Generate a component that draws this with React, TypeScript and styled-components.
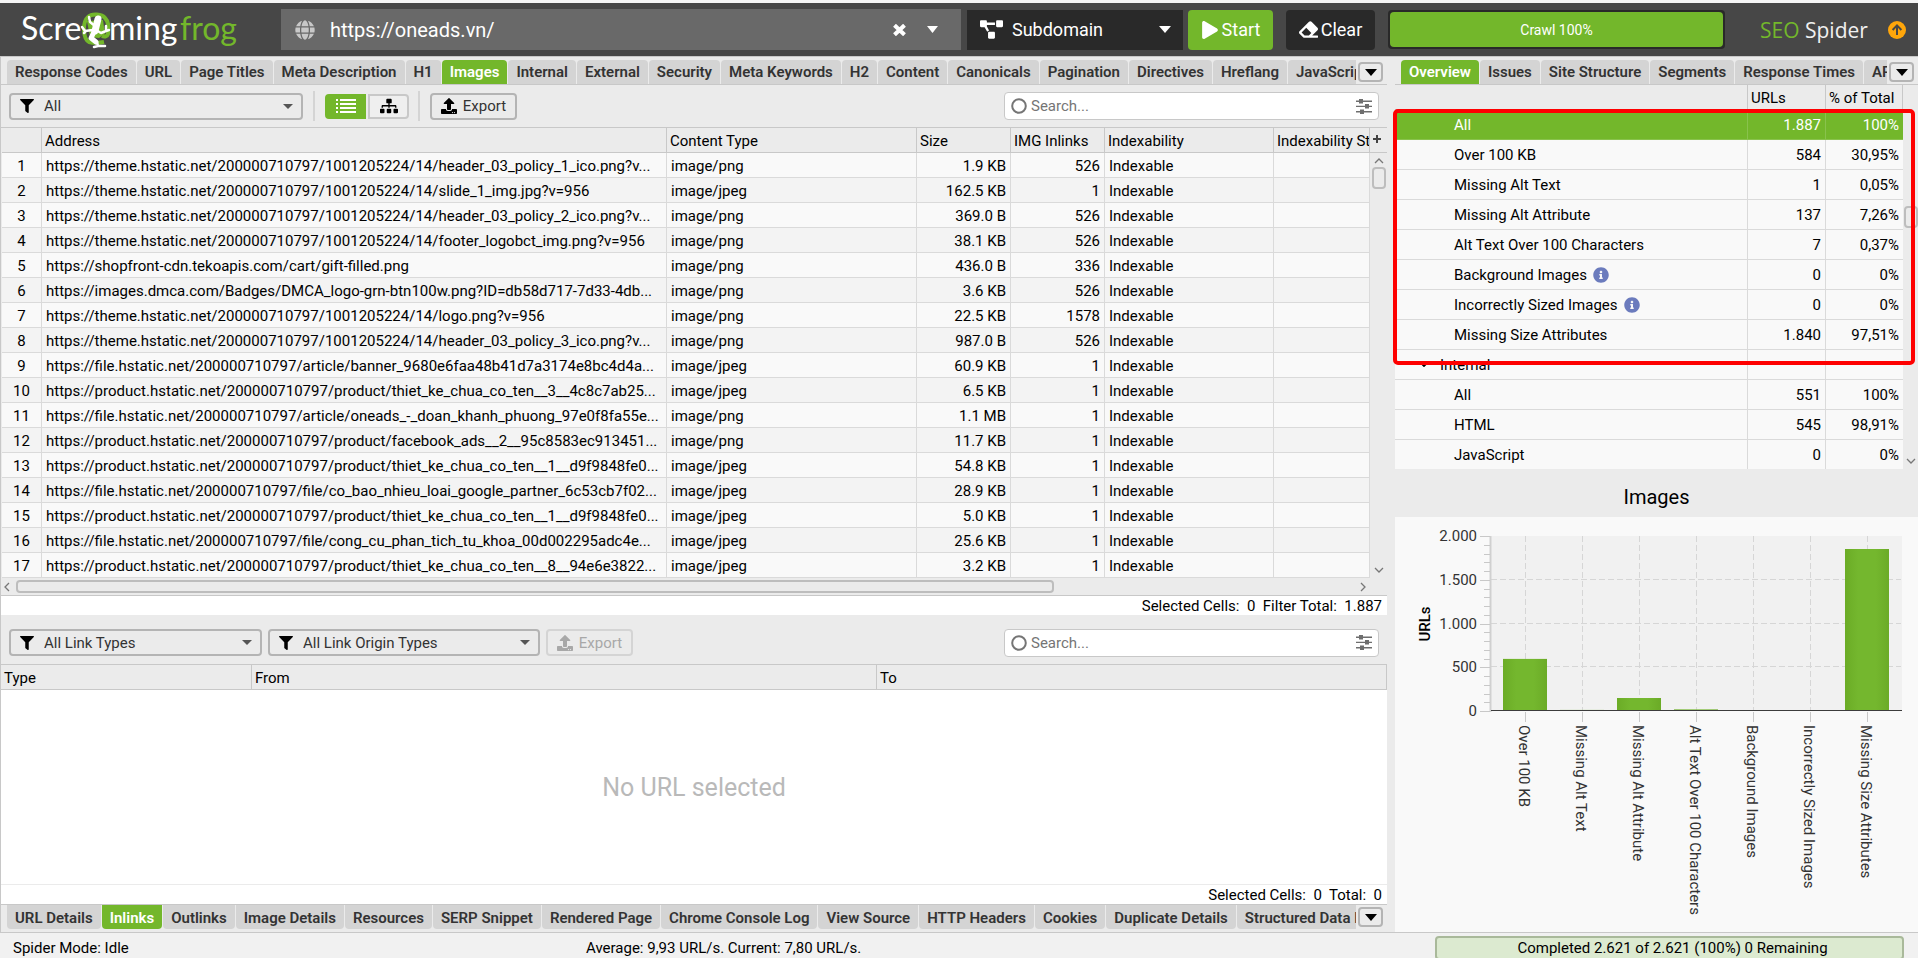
import React from 'react';
import styled, { createGlobalStyle } from 'styled-components';
import {
  FaCaretDown,
  FaEraser,
  FaFilter,
  FaGlobe,
  FaInfoCircle,
  FaPlay,
  FaProjectDiagram,
  FaSitemap,
  FaUpload,
} from 'react-icons/fa';

const c = {
  green: '#73b72b',
  dark: '#474747',
  black: '#292929',
  panel: '#ebebeb',
  tab: '#d4d4d4',
  line: '#c8c8c8',
  cellLine: '#dadada',
  row: '#f9f9f9',
  rowAlt: '#f3f3f3',
  mute: '#757575',
};

const GlobalStyle = createGlobalStyle`
  * { box-sizing: border-box; }
  body {
    margin: 0;
    background: ${c.panel};
    color: #000;
    font-family: Roboto, "Liberation Sans", sans-serif;
    font-size: 15px;
    line-height: 20px;
  }
  button, input, select { font: inherit; color: inherit; margin: 0; }
`;

const Page = styled.div`
  display: flex;
  flex-direction: column;
  height: 100vh;
  overflow: hidden;
`;

/* ---------- top bar ---------- */

const TopBar = styled.header`
  display: flex;
  align-items: center;
  height: 57px;
  flex: none;
  padding: 0 12px 0 20px;
  background: ${c.dark};
  border-top: 3px solid #f5f5f5;
  border-bottom: 1px solid ${c.line};
`;

const LogoSvg = styled.svg`
  flex: none;
  width: 220px;
  height: 52px;
  margin-right: 41px;
  font-family: Lato, sans-serif;
`;

const UrlBox = styled.label`
  display: flex;
  align-items: center;
  flex: 1;
  height: 41px;
  padding: 0 20px 0 14px;
  gap: 15px;
  background: #696969;
  color: #c8c8c8;
`;

const UrlInput = styled.input`
  flex: 1;
  min-width: 0;
  border: 0;
  padding: 0;
  outline: 0;
  background: transparent;
  color: #fff;
  font-size: 20px;
`;

const BareButton = styled.button`
  display: flex;
  align-items: center;
  justify-content: center;
  flex: none;
  width: 18px;
  height: 24px;
  padding: 0;
  border: 0;
  background: transparent;
  color: #fff;
`;

const ScopeBox = styled.div`
  display: flex;
  align-items: center;
  position: relative;
  width: 216px;
  height: 40px;
  margin-left: 6px;
  background: ${c.black};
  color: #fff;
`;

const ScopeSelect = styled.select`
  appearance: none;
  width: 100%;
  height: 40px;
  padding: 0 40px 0 45px;
  border: 0;
  background: transparent;
  font-size: 18px;
`;

const Overlay = styled.span<{ $left?: number; $right?: number }>`
  position: absolute;
  display: flex;
  top: 0;
  bottom: 0;
  align-items: center;
  pointer-events: none;
  ${(p) => (p.$left !== undefined ? `left: ${p.$left}px;` : '')}
  ${(p) => (p.$right !== undefined ? `right: ${p.$right}px;` : '')}
`;

const ActionButton = styled.button<{ $tone: string; $width: number }>`
  display: flex;
  align-items: center;
  justify-content: center;
  gap: 3px;
  width: ${(p) => p.$width}px;
  height: 40px;
  margin-left: ${(p) => (p.$tone === c.green ? 5 : 13)}px;
  padding: 0;
  border: 0;
  border-radius: 4px;
  background: ${(p) => p.$tone};
  color: #fff;
  font-size: 18px;
`;

const CrawlProgress = styled.div`
  width: 337px;
  height: 39px;
  margin-left: 13px;
  padding: 2px;
  border-radius: 4px;
  background: ${c.black};
`;

const CrawlFill = styled.div`
  display: flex;
  align-items: center;
  justify-content: center;
  height: 35px;
  border-radius: 4px;
  background: ${c.green};
  color: #fff;
  font-size: 14px;
`;

const Product = styled.div`
  margin-left: 35px;
  width: 128px;
  font-family: "Open Sans", sans-serif;
  font-size: 21px;
  line-height: 30px;
  color: #f0f0f0;
  white-space: nowrap;
  span { color: ${c.green}; }
`;

/* ---------- shared parts ---------- */

const Workspace = styled.main`
  display: grid;
  grid-template-columns: minmax(0, 1fr) 523px;
  column-gap: 8px;
  flex: 1;
  min-height: 0;
`;

const LeftPane = styled.section`
  display: flex;
  flex-direction: column;
  min-height: 0;
  border-left: 1px solid ${c.line};
`;

const RightPane = styled.section`
  display: flex;
  flex-direction: column;
  min-height: 0;
`;

const TabStrip = styled.div<{ $bottom?: boolean }>`
  display: flex;
  align-items: ${(p) => (p.$bottom ? 'flex-start' : 'flex-end')};
  flex: none;
  height: 28px;
  gap: 2px;
  padding: 0 4px 0 6px;
  border-top: ${(p) => (p.$bottom ? `1px solid ${c.line}` : '0')};
  border-bottom: ${(p) => (p.$bottom ? '0' : `1px solid ${c.line}`)};
`;

const TabList = styled.div`
  display: flex;
  flex: 1;
  min-width: 0;
  gap: 1px;
  overflow: hidden;
`;

const Tab = styled.button<{ $active: boolean; $bottom?: boolean }>`
  flex: none;
  height: 24px;
  padding: ${(p) => (p.$bottom ? '1px' : '0')} 8px 0;
  border: 0;
  border-radius: ${(p) => (p.$bottom ? '0 0 4px 4px' : '4px 4px 0 0')};
  background: ${(p) => (p.$active ? c.green : c.tab)};
  color: ${(p) => (p.$active ? '#fff' : '#333')};
  font-weight: 600;
  white-space: nowrap;
`;

const MoreTabs = styled.button`
  display: flex;
  align-items: center;
  justify-content: center;
  width: 25px;
  height: 20px;
  margin: 2px 0;
  padding: 0;
  border: 2px solid #b4b4b4;
  border-radius: 4px;
  background: ${c.panel};
`;

const Toolbar = styled.div<{ $lower?: boolean }>`
  display: flex;
  align-items: center;
  flex: none;
  height: ${(p) => (p.$lower ? 50 : 43)}px;
  padding: ${(p) => (p.$lower ? 6 : 0)}px 8px 0;
  border-bottom: 1px solid ${c.line};
`;

const SelectBox = styled.div<{ $width: number }>`
  position: relative;
  width: ${(p) => p.$width}px;
  margin-right: 6px;
`;

const Select = styled.select`
  appearance: none;
  display: block;
  width: 100%;
  height: 27px;
  padding: 0 28px 0 33px;
  border: 2px solid #b4b4b4;
  border-radius: 4px;
  background: ${c.panel};
  color: #333;
`;

const Divider = styled.span`
  width: 2px;
  height: 30px;
  margin: 0 10px 0 4px;
  background: #d4d4d4;
`;

const ViewToggle = styled.div`
  display: flex;
  gap: 2px;
  margin-right: 5px;
`;

const ViewButton = styled.button<{ $active?: boolean }>`
  display: flex;
  align-items: center;
  justify-content: center;
  width: 41px;
  height: 25px;
  padding: 0;
  border: 2px solid ${(p) => (p.$active ? c.green : c.line)};
  border-radius: ${(p) => (p.$active ? '4px 0 0 4px' : '0 4px 4px 0')};
  background: ${(p) => (p.$active ? c.green : '#efefef')};
`;

const ExportButton = styled.button`
  display: flex;
  align-items: center;
  justify-content: center;
  gap: 6px;
  width: 87px;
  height: 27px;
  padding: 0;
  border: 2px solid #b4b4b4;
  border-radius: 4px;
  background: ${c.panel};
  color: #333;
  svg { color: #000; }
  &:disabled { border-color: #d4d4d4; color: #a8a8a8; }
  &:disabled svg { color: #a8a8a8; }
`;

const SearchBox = styled.label`
  display: flex;
  align-items: center;
  gap: 4px;
  width: 375px;
  height: 28px;
  margin-left: auto;
  padding: 0 6px;
  border: 1px solid ${c.line};
  border-radius: 4px;
  background: #fff;
`;

const SearchInput = styled.input`
  flex: 1;
  min-width: 0;
  border: 0;
  padding: 0;
  outline: 0;
  background: transparent;
  &::placeholder { color: ${c.mute}; opacity: 1; }
`;

const Totals = styled.div`
  flex: none;
  height: 19px;
  padding-right: 5px;
  background: #fff;
  text-align: right;
  white-space: pre;
`;

/* ---------- tables ---------- */

const TableFrame = styled.div`
  display: grid;
  grid-template-columns: minmax(0, 1fr) 17px;
  flex: none;
  padding-left: 1px;
  border-bottom: 1px solid ${c.line};
`;

const Table = styled.table`
  width: 100%;
  table-layout: fixed;
  border-collapse: separate;
  border-spacing: 0;
`;

const Th = styled.th`
  height: 25px;
  padding: 1px 0 0 3px;
  border-right: 1px solid ${c.line};
  border-bottom: 1px solid ${c.line};
  text-align: left;
  font-weight: 400;
  white-space: nowrap;
  overflow: hidden;
`;

const Row = styled.tr`
  background: ${c.row};
  &:nth-child(even) { background: ${c.rowAlt}; }
`;

const Td = styled.td<{ $align?: 'center' | 'right' }>`
  height: 25px;
  padding: 1px 4px 0;
  border-right: 1px solid ${c.cellLine};
  border-bottom: 1px solid ${c.cellLine};
  text-align: ${(p) => p.$align || 'left'};
  white-space: nowrap;
  overflow: hidden;
`;

const SideColumn = styled.div`
  display: flex;
  flex-direction: column;
`;

const AddColumn = styled.button`
  display: flex;
  align-items: center;
  justify-content: center;
  height: 25px;
  padding: 0 4px 3px 0;
  border: 0;
  border-bottom: 1px solid ${c.line};
  background: ${c.panel};
`;

const VBar = styled.div`
  display: flex;
  flex-direction: column;
  align-items: center;
  flex: 1;
  padding: 3px 0;
  background: ${c.panel};
`;

const HBar = styled.div`
  display: flex;
  align-items: center;
  height: 17px;
  padding: 0 2px 0 0;
`;

const Thumb = styled.span<{ $push: number }>`
  width: 14px;
  height: 22px;
  margin-top: ${(p) => p.$push}px;
  margin-bottom: auto;
  border: 2px solid #bdbdbd;
  border-radius: 4px;
`;

const HThumb = styled.span`
  width: 76%;
  height: 13px;
  margin: 0 auto 0 4px;
  border: 2px solid #bdbdbd;
  border-radius: 4px;
`;

const EmptyBody = styled.div`
  display: flex;
  align-items: center;
  justify-content: center;
  flex: 1;
  min-height: 60px;
  padding-top: 2px;
  background: #fff;
  border-bottom: 1px solid ${c.panel};
  color: #b9b9b9;
  font-size: 25px;
`;

/* ---------- overview ---------- */

const Overview = styled.div`
  position: relative;
  display: grid;
  grid-template-columns: minmax(0, 1fr) 15px;
  flex: none;
  height: 384px;
`;

const OverviewClip = styled.div`
  overflow: hidden;
`;

const OverviewRow = styled.tr<{ $active?: boolean }>`
  background: ${(p) => (p.$active ? c.green : c.row)};
  color: ${(p) => (p.$active ? '#fff' : '#000')};
  td { height: 30px; }
  td:first-child { padding-left: 59px; }
  td:last-child { border-right: 0; }
  ${(p) => (p.$active ? 'td { border-color: #89c24d; }' : '')}
`;

const OverviewGroup = styled(OverviewRow)`
  td:first-child { padding-left: 24px; }
`;

const Label = styled.span`
  display: inline-flex;
  align-items: center;
  gap: 6px;
  svg { color: #6b7bbd; }
`;

const GroupLabel = styled(Label)`
  gap: 11px;
  svg { color: #000; }
`;

const Highlight = styled.div`
  position: absolute;
  top: 24px;
  left: -2px;
  right: 3px;
  height: 256px;
  border: 4px solid #fe0000;
  border-radius: 5px;
  pointer-events: none;
`;

const ChartTitle = styled.h2`
  flex: none;
  margin: 0;
  height: 48px;
  padding-top: 16px;
  text-align: center;
  font-size: 20px;
  line-height: 24px;
  font-weight: 400;
`;

const ChartPane = styled.div`
  flex: 1;
  min-height: 0;
  background: ${c.row};
`;

const ChartSvg = styled.svg`
  display: block;
  width: 100%;
  font-size: 15px;
`;

/* ---------- status bar ---------- */

const StatusBar = styled.footer`
  display: grid;
  grid-template-columns: 573px minmax(0, 1fr) 469px;
  align-items: start;
  flex: none;
  height: 26px;
  padding: 3px 14px 0 13px;
  border-top: 1px solid ${c.line};
  background: #f1f1f1;
`;

const StatusText = styled.span`
  padding-top: 2px;
`;

const Completed = styled.div`
  height: 24px;
  padding-left: 6px;
  border: 2px solid #a9b99a;
  border-radius: 4px;
  background: #dcead0;
  text-align: center;
`;

/* ---------- icons ---------- */

const ChevronIcon = ({ d }: { d: string }) => (
  <svg width="10" height="10" viewBox="0 0 10 10" fill="none" stroke="#777" strokeWidth="1.3">
    <path d={d} />
  </svg>
);

const Triangle = ({ w, h, fill }: { w: number; h: number; fill: string }) => (
  <svg width={w} height={h} viewBox="0 0 12 8" preserveAspectRatio="none">
    <path d="M0 0h12L6 8z" fill={fill} />
  </svg>
);

const PlusIcon = () => (
  <svg width="8" height="8" viewBox="0 0 8 8" fill="#444">
    <path d="M3 0h2v3h3v2H5v3H3V5H0V3h3z" />
  </svg>
);

const ListIcon = () => (
  <svg width="20" height="14" viewBox="0 0 20 14" fill="#fff">
    {[0, 4, 8, 12].map((y) => (
      <path key={y} d={`M0 ${y}h2v2h-2zM4 ${y}h16v2h-16z`} />
    ))}
  </svg>
);

const SlidersIcon = () => (
  <svg width="16" height="15" viewBox="0 0 16 15" fill="#6e6e6e">
    <path d="M0 1.5h16v1.6H0zM0 6.8h16v1.2H0zM0 12h16v1.4H0z" />
    <path d="M3 0h4v4.4H3zM9 5h4v4.6H9zM4 10.4h4V15H4z" />
  </svg>
);

const RingIcon = () => (
  <svg width="16" height="16" viewBox="0 0 16 16" fill="none" stroke="#757575" strokeWidth="2">
    <circle cx="8" cy="8" r="6.8" />
  </svg>
);

const CrossIcon = () => (
  <svg width="13" height="12" viewBox="0 0 13 12" stroke="#fff" strokeWidth="4">
    <path d="M1.5 1.2l10 9.6M11.5 1.2l-10 9.6" />
  </svg>
);

const UpgradeIcon = () => (
  <svg width="18" height="18" viewBox="0 0 18 18">
    <circle cx="9" cy="9" r="9" fill="#ffa60a" />
    <path d="M9 14V4.5M4.6 9L9 4.4 13.4 9" fill="none" stroke="#474747" strokeWidth="2" />
  </svg>
);

const Logo = () => (
  <LogoSvg viewBox="0 0 220 52" role="img" aria-label="Screamingfrog">
    <g fontSize="32">
      <text x="1" y="36" fill="#fff">Scre</text>
      <text x="89" y="36" fill="#fff">ming</text>
      <text x="160" y="36" fill={c.green}>frog</text>
    </g>
    <path
      d="M84 38c-5 1-11 1-15 0-6-3-7-20-1-25 4-4 14-3 17 1 3 3 4 9 3 16-1 3-4 3-6 2"
      fill="none"
      stroke={c.green}
      strokeWidth="4"
    />
    <path d="M67 17l16-1 2 14-6 4-9-1z" fill={c.green} />
    <g fill="none" stroke="#fff" strokeLinecap="round" strokeLinejoin="round">
      <path d="M78 15l-3 12" strokeWidth="7" />
      <path d="M69 13l1 5 5 4" strokeWidth="2.5" />
      <path d="M62 23l3 4 8-1M64 29l2-2" strokeWidth="2.5" />
      <path d="M76 26l5 3 5-2M86 22v5l3-1" strokeWidth="2.5" />
      <path d="M74 28l-3 6 5 4" strokeWidth="5" />
      <path d="M77 38l1 4M74 43l4-1 7 0" strokeWidth="2.5" />
    </g>
  </LogoSvg>
);

/* ---------- data ---------- */

const topTabs = [
  'Response Codes', 'URL', 'Page Titles', 'Meta Description', 'H1', 'Images', 'Internal', 'External',
  'Security', 'Meta Keywords', 'H2', 'Content', 'Canonicals', 'Pagination', 'Directives', 'Hreflang', 'JavaScript',
];

const bottomTabs = [
  'URL Details', 'Inlinks', 'Outlinks', 'Image Details', 'Resources', 'SERP Snippet', 'Rendered Page',
  'Chrome Console Log', 'View Source', 'HTTP Headers', 'Cookies', 'Duplicate Details', 'Structured Data Details',
];

const sideTabs = ['Overview', 'Issues', 'Site Structure', 'Segments', 'Response Times', 'API'];

const rows: [string, string, string, string][] = [
  ['https://theme.hstatic.net/200000710797/1001205224/14/header_03_policy_1_ico.png?v...', 'image/png', '1.9 KB', '526'],
  ['https://theme.hstatic.net/200000710797/1001205224/14/slide_1_img.jpg?v=956', 'image/jpeg', '162.5 KB', '1'],
  ['https://theme.hstatic.net/200000710797/1001205224/14/header_03_policy_2_ico.png?v...', 'image/png', '369.0 B', '526'],
  ['https://theme.hstatic.net/200000710797/1001205224/14/footer_logobct_img.png?v=956', 'image/png', '38.1 KB', '526'],
  ['https://shopfront-cdn.tekoapis.com/cart/gift-filled.png', 'image/png', '436.0 B', '336'],
  ['https://images.dmca.com/Badges/DMCA_logo-grn-btn100w.png?ID=db58d717-7d33-4db...', 'image/png', '3.6 KB', '526'],
  ['https://theme.hstatic.net/200000710797/1001205224/14/logo.png?v=956', 'image/png', '22.5 KB', '1578'],
  ['https://theme.hstatic.net/200000710797/1001205224/14/header_03_policy_3_ico.png?v...', 'image/png', '987.0 B', '526'],
  ['https://file.hstatic.net/200000710797/article/banner_9680e6faa48b41d7a3174e8bc4d4a...', 'image/jpeg', '60.9 KB', '1'],
  ['https://product.hstatic.net/200000710797/product/thiet_ke_chua_co_ten__3__4c8c7ab25...', 'image/jpeg', '6.5 KB', '1'],
  ['https://file.hstatic.net/200000710797/article/oneads_-_doan_khanh_phuong_97e0f8fa55e...', 'image/png', '1.1 MB', '1'],
  ['https://product.hstatic.net/200000710797/product/facebook_ads__2__95c8583ec913451...', 'image/png', '11.7 KB', '1'],
  ['https://product.hstatic.net/200000710797/product/thiet_ke_chua_co_ten__1__d9f9848fe0...', 'image/jpeg', '54.8 KB', '1'],
  ['https://file.hstatic.net/200000710797/file/co_bao_nhieu_loai_google_partner_6c53cb7f02...', 'image/jpeg', '28.9 KB', '1'],
  ['https://product.hstatic.net/200000710797/product/thiet_ke_chua_co_ten__1__d9f9848fe0...', 'image/jpeg', '5.0 KB', '1'],
  ['https://file.hstatic.net/200000710797/file/cong_cu_phan_tich_tu_khoa_00d002295adc4e...', 'image/jpeg', '25.6 KB', '1'],
  ['https://product.hstatic.net/200000710797/product/thiet_ke_chua_co_ten__8__94e6e3822...', 'image/jpeg', '3.2 KB', '1'],
];

type Stat = { label: string; urls: string; pct: string; info?: boolean };

const imageStats: Stat[] = [
  { label: 'All', urls: '1.887', pct: '100%' },
  { label: 'Over 100 KB', urls: '584', pct: '30,95%' },
  { label: 'Missing Alt Text', urls: '1', pct: '0,05%' },
  { label: 'Missing Alt Attribute', urls: '137', pct: '7,26%' },
  { label: 'Alt Text Over 100 Characters', urls: '7', pct: '0,37%' },
  { label: 'Background Images', urls: '0', pct: '0%', info: true },
  { label: 'Incorrectly Sized Images', urls: '0', pct: '0%', info: true },
  { label: 'Missing Size Attributes', urls: '1.840', pct: '97,51%' },
];

const internalStats: Stat[] = [
  { label: 'All', urls: '551', pct: '100%' },
  { label: 'HTML', urls: '545', pct: '98,91%' },
  { label: 'JavaScript', urls: '0', pct: '0%' },
];

const chartData: [string, number][] = [
  ['Over 100 KB', 584],
  ['Missing Alt Text', 1],
  ['Missing Alt Attribute', 137],
  ['Alt Text Over 100 Characters', 7],
  ['Background Images', 0],
  ['Incorrectly Sized Images', 0],
  ['Missing Size Attributes', 1840],
];

/* ---------- composed pieces ---------- */

const Tabs = ({ items, active, bottom }: { items: string[]; active: string; bottom?: boolean }) => (
  <TabStrip $bottom={bottom}>
    <TabList role="tablist">
      {items.map((t) => (
        <Tab key={t} role="tab" aria-selected={t === active} $active={t === active} $bottom={bottom}>
          {t}
        </Tab>
      ))}
    </TabList>
    <MoreTabs aria-label="More tabs">
      <Triangle w={12} h={7} fill="#000" />
    </MoreTabs>
  </TabStrip>
);

const FilterSelect = ({ width, value, label }: { width: number; value: string; label: string }) => (
  <SelectBox $width={width}>
    <Select aria-label={label} defaultValue={value}>
      <option>{value}</option>
    </Select>
    <Overlay $left={11}>
      <FaFilter size={14} color="#000" />
    </Overlay>
    <Overlay $right={10}>
      <Triangle w={10} h={5} fill="#555" />
    </Overlay>
  </SelectBox>
);

const Search = () => (
  <SearchBox>
    <RingIcon />
    <SearchInput placeholder="Search..." aria-label="Search" />
    <SlidersIcon />
  </SearchBox>
);

const BarChart = () => {
  const base = 194;
  const scale = 175 / 2000;
  const x = (i: number) => 130 + i * 57;
  return (
    <ChartSvg viewBox="0 0 523 415" role="img" aria-label="Images by URL count">
      <defs>
        <linearGradient id="bar">
          <stop offset="0" stopColor="#6bac26" />
          <stop offset="0.3" stopColor="#74b72e" />
          <stop offset="0.7" stopColor="#74b72e" />
          <stop offset="1" stopColor="#6bab27" />
        </linearGradient>
      </defs>
      <rect x="96" y="19" width="411" height="175" fill="#f1f1f1" />
      <g stroke="#d6d6d6" strokeDasharray="6 3">
        {[500, 1000, 1500].map((v) => (
          <path key={v} d={`M96 ${Math.round(base - v * scale) - 0.5}H506`} />
        ))}
        {chartData.map((d, i) => (
          <path key={d[0]} d={`M${x(i) + 0.5} 19V194`} />
        ))}
      </g>
      {chartData.map(([name, v], i) => (
        <rect key={name} x={x(i) - 22} y={base - v * scale - (v ? 1 : 0)} width="44" height={v * scale + (v ? 1 : 0)} fill="url(#bar)" />
      ))}
      <path d="M95.5 19V195" stroke="#d0d0d0" strokeWidth="2" />
      <g stroke="#c8c8c8">
        {Array.from({ length: 21 }, (_, i) => (
          <path key={i} d={`M${i % 5 ? 89 : 85} ${Math.round(base - i * 100 * scale) + 0.5}H95`} />
        ))}
        {chartData.map((d, i) => (
          <path key={d[0]} d={`M${x(i) + 0.5} 195V205`} />
        ))}
      </g>
      <path d="M96 193.5H507" stroke="#3c3c3c" />
      <g fill="#333" textAnchor="end">
        {['0', '500', '1.000', '1.500', '2.000'].map((t, i) => (
          <text key={t} x="82" y={Math.round(base - i * 500 * scale) + 5}>{t}</text>
        ))}
      </g>
      <g fill="#333">
        {chartData.map(([name], i) => (
          <text key={name} transform={`translate(${x(i) - 6} 208) rotate(90)`}>{name}</text>
        ))}
      </g>
      <text transform="translate(35 107) rotate(-90)" textAnchor="middle" fontWeight="500">URLs</text>
    </ChartSvg>
  );
};

const StatRow = ({ s, active }: { s: Stat; active?: boolean }) => (
  <OverviewRow $active={active}>
    <Td>
      <Label>
        {s.label}
        {s.info && <FaInfoCircle size={16} />}
      </Label>
    </Td>
    <Td $align="right">{s.urls}</Td>
    <Td $align="right">{s.pct}</Td>
  </OverviewRow>
);

export default function App() {
  return (
    <Page>
      <GlobalStyle />
      <TopBar>
        <Logo />
        <UrlBox>
          <FaGlobe size={20} />
          <UrlInput aria-label="URL to spider" defaultValue="https://oneads.vn/" />
          <BareButton aria-label="Clear URL">
            <CrossIcon />
          </BareButton>
          <BareButton aria-label="Recent URLs">
            <Triangle w={11} h={7} fill="#fff" />
          </BareButton>
        </UrlBox>
        <ScopeBox>
          <ScopeSelect aria-label="Crawl scope" defaultValue="Subdomain">
            <option>Subdomain</option>
          </ScopeSelect>
          <Overlay $left={13}>
            <FaProjectDiagram size={23} />
          </Overlay>
          <Overlay $right={12}>
            <Triangle w={12} h={7} fill="#fff" />
          </Overlay>
        </ScopeBox>
        <ActionButton $tone={c.green} $width={85}>
          <FaPlay size={18} /> Start
        </ActionButton>
        <ActionButton $tone={c.black} $width={89}>
          <FaEraser size={19} /> Clear
        </ActionButton>
        <CrawlProgress>
          <CrawlFill>Crawl 100%</CrawlFill>
        </CrawlProgress>
        <Product>
          <span>SEO</span> Spider
        </Product>
        <BareButton aria-label="Update available">
          <UpgradeIcon />
        </BareButton>
      </TopBar>

      <Workspace>
        <LeftPane>
          <Tabs items={topTabs} active="Images" />
          <Toolbar>
            <FilterSelect width={294} value="All" label="Filter" />
            <Divider />
            <ViewToggle>
              <ViewButton $active aria-label="List view">
                <ListIcon />
              </ViewButton>
              <ViewButton aria-label="Tree view">
                <FaSitemap size={18} color="#000" />
              </ViewButton>
            </ViewToggle>
            <Divider />
            <ExportButton>
              <FaUpload size={16} /> Export
            </ExportButton>
            <Search />
          </Toolbar>
          <TableFrame>
            <Table>
              <colgroup>
                <col width="40" />
                <col width="625" />
                <col width="250" />
                <col width="94" />
                <col width="94" />
                <col width="169" />
                <col />
              </colgroup>
              <thead>
                <tr>
                  <Th aria-label="Row" />
                  <Th>Address</Th>
                  <Th>Content Type</Th>
                  <Th>Size</Th>
                  <Th>IMG Inlinks</Th>
                  <Th>Indexability</Th>
                  <Th>Indexability Status</Th>
                </tr>
              </thead>
              <tbody>
                {rows.map(([url, type, size, links], i) => (
                  <Row key={i}>
                    <Td $align="center">{i + 1}</Td>
                    <Td>{url}</Td>
                    <Td>{type}</Td>
                    <Td $align="right">{size}</Td>
                    <Td $align="right">{links}</Td>
                    <Td>Indexable</Td>
                    <Td />
                  </Row>
                ))}
              </tbody>
            </Table>
            <SideColumn>
              <AddColumn aria-label="Add column">
                <PlusIcon />
              </AddColumn>
              <VBar>
                <ChevronIcon d="M1 7l4-4 4 4" />
                <Thumb $push={1} />
                <ChevronIcon d="M1 3l4 4 4-4" />
              </VBar>
            </SideColumn>
            <HBar>
              <ChevronIcon d="M7 1L3 5l4 4" />
              <HThumb />
              <ChevronIcon d="M3 1l4 4-4 4" />
            </HBar>
          </TableFrame>
          <Totals>{'Selected Cells:  0  Filter Total:  1.887'}</Totals>
          <Toolbar $lower>
            <FilterSelect width={253} value="All Link Types" label="Link types" />
            <FilterSelect width={272} value="All Link Origin Types" label="Link origin types" />
            <ExportButton disabled>
              <FaUpload size={16} /> Export
            </ExportButton>
            <Search />
          </Toolbar>
          <Table>
            <colgroup>
              <col width="251" />
              <col width="625" />
              <col />
            </colgroup>
            <thead>
              <tr>
                <Th>Type</Th>
                <Th>From</Th>
                <Th>To</Th>
              </tr>
            </thead>
          </Table>
          <EmptyBody>No URL selected</EmptyBody>
          <Totals>{'Selected Cells:  0  Total:  0'}</Totals>
          <Tabs items={bottomTabs} active="Inlinks" bottom />
        </LeftPane>

        <RightPane>
          <Tabs items={sideTabs} active="Overview" />
          <Overview>
            <OverviewClip>
              <Table>
                <colgroup>
                  <col />
                  <col width="78" />
                  <col width="77" />
                </colgroup>
                <thead>
                  <tr>
                    <Th aria-label="Category" />
                    <Th>URLs</Th>
                    <Th>% of Total</Th>
                  </tr>
                </thead>
                <tbody>
                  {imageStats.map((s, i) => (
                    <StatRow key={s.label} s={s} active={i === 0} />
                  ))}
                  <OverviewGroup>
                    <Td>
                      <GroupLabel>
                        <FaCaretDown size={10} /> Internal
                      </GroupLabel>
                    </Td>
                    <Td />
                    <Td />
                  </OverviewGroup>
                  {internalStats.map((s) => (
                    <StatRow key={s.label} s={s} />
                  ))}
                </tbody>
              </Table>
            </OverviewClip>
            <SideColumn>
              <VBar>
                <Thumb $push={118} />
                <ChevronIcon d="M1 3l4 4 4-4" />
              </VBar>
            </SideColumn>
            <Highlight />
          </Overview>
          <ChartTitle>Images</ChartTitle>
          <ChartPane>
            <BarChart />
          </ChartPane>
        </RightPane>
      </Workspace>

      <StatusBar>
        <StatusText>Spider Mode: Idle</StatusText>
        <StatusText>Average: 9,93 URL/s. Current: 7,80 URL/s.</StatusText>
        <Completed>Completed 2.621 of 2.621 (100%) 0 Remaining</Completed>
      </StatusBar>
    </Page>
  );
}
